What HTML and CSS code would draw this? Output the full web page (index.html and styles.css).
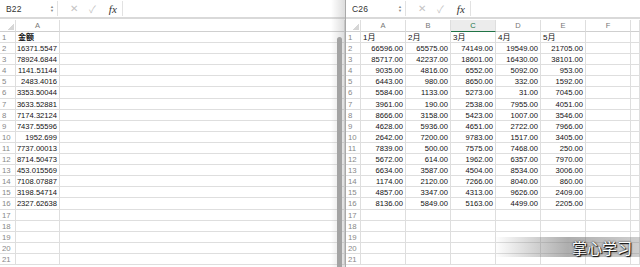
FILE: index.html
```html
<!DOCTYPE html>
<html lang="zh">
<head>
    <meta charset="UTF-8">
    <title>金额</title>
    <link rel="stylesheet" href="styles.css">
</head>
<body>
    <div class="screen">
        <div class="pane pane-left">
            <div class="toolbar">
                <div class="name-box">B22</div>
                <div class="stepper"><span>▲</span><span>▼</span></div>
                <div class="tool-icons">
                    <span class="cancel">✕</span>
                    <span class="ok">✓</span>
                    <span class="fx">fx</span>
                </div>
                <div class="formula"></div>
            </div>
            <div class="sheet sheet-left" id="leftSheet"></div>
            <div class="scroll-shadow"></div>
            <div class="scroll-thumb"></div>
        </div>

        <div class="pane pane-right">
            <div class="toolbar">
                <div class="name-box">C26</div>
                <div class="stepper"><span>▲</span><span>▼</span></div>
                <div class="tool-icons">
                    <span class="cancel">✕</span>
                    <span class="ok">✓</span>
                    <span class="fx">fx</span>
                </div>
                <div class="formula"></div>
            </div>
            <div class="sheet sheet-right" id="rightSheet"></div>
            <div class="watermark"><span>掌心学习</span></div>
        </div>
    </div>

    <script>
        const leftData = [
            '16371.5547', '78924.6844', '1141.51144', '2483.4016', '3353.50044',
            '3633.52881', '7174.32124', '7437.55596', '1952.699', '7737.00013',
            '8714.50473', '453.015569', '7108.07887', '3198.54714', '2327.62638'
        ];

        const rightData = [
            [66596, 65575, 74149, 19549, 21705],
            [85717, 42237, 18601, 16430, 38101],
            [9035, 4816, 6552, 5092, 953],
            [6443, 980, 8650, 332, 1592],
            [5584, 1133, 5273, 31, 7045],
            [3961, 190, 2538, 7955, 4051],
            [8666, 3158, 5423, 1007, 3546],
            [4628, 5936, 4651, 2722, 7966],
            [2642, 7200, 9783, 1517, 3405],
            [7839, 500, 7575, 7468, 250],
            [5672, 614, 1962, 6357, 7970],
            [6634, 3587, 4504, 8534, 3006],
            [1174, 2120, 7266, 8040, 860],
            [4857, 3347, 4313, 9626, 2409],
            [8136, 5849, 5163, 4499, 2205]
        ];

        function cell(parent, cls, text) {
            const el = document.createElement('div');
            el.className = cls;
            el.textContent = text || '';
            parent.appendChild(el);
        }

        function buildSheet(id, columns, rowValues) {
            const sheet = document.getElementById(id);
            cell(sheet, 'corner');
            columns.forEach(c => cell(sheet, 'col-head' + (c === 'C' && id === 'rightSheet' ? ' active' : ''), c));
            for (let r = 1; r <= 21; r++) {
                cell(sheet, 'row-head', r);
                const values = rowValues(r);
                columns.forEach((c, i) => {
                    cell(sheet, 'cell' + (r === 1 ? ' text' : ''), values[i]);
                });
            }
        }

        buildSheet('leftSheet', ['A', ''], r => {
            if (r === 1) return ['金额', ''];
            return [leftData[r - 2] || '', ''];
        });

        buildSheet('rightSheet', ['A', 'B', 'C', 'D', 'E', 'F', ''], r => {
            if (r === 1) return ['1月', '2月', '3月', '4月', '5月', '', ''];
            const row = rightData[r - 2];
            if (!row) return ['', '', '', '', '', '', ''];
            return row.map(n => n.toFixed(2)).concat(['', '']);
        });
    </script>
</body>
</html>
```

FILE: styles.css
```css
* {
    margin: 0;
    padding: 0;
    box-sizing: border-box;
}

body {
    font-family: 'Liberation Sans', Arial, 'Noto Sans CJK SC', sans-serif;
    background: #ffffff;
    color: #222;
    width: 640px;
    height: 267px;
    overflow: hidden;
}

.screen {
    display: flex;
    height: 267px;
}

.pane {
    position: relative;
    overflow: hidden;
    height: 267px;
}

.pane-left {
    width: 345px;
}

.pane-right {
    flex: 1;
    border-left: 1px solid #a9a9a9;
}

/* formula bar */
.toolbar {
    display: flex;
    align-items: center;
    height: 19px;
    border-bottom: 2px solid #d9d9d9;
    margin-bottom: 1px;
    font-size: 8.5px;
    color: #333;
}

.name-box {
    width: 50px;
    padding-left: 6px;
    letter-spacing: 0.2px;
}

.pane-right .name-box {
    width: 52px;
}

.stepper {
    display: flex;
    flex-direction: column;
    font-size: 4px;
    line-height: 4px;
    color: #888;
    width: 8px;
    border-right: 1px solid #e2e2e2;
    height: 15px;
    justify-content: center;
}

.tool-icons {
    display: flex;
    align-items: center;
    gap: 11px;
    padding: 0 5px 0 12px;
    height: 15px;
    border-right: 1px solid #e2e2e2;
    color: #c4c4c4;
}

.cancel,
.ok {
    font-size: 10px;
}

.fx {
    font-family: 'Liberation Serif', serif;
    font-style: italic;
    font-size: 11px;
    color: #333;
    padding-left: 2px;
}

/* grid */
.sheet {
    display: grid;
    grid-auto-rows: 11.1px;
    font-size: 7.6px;
    line-height: 11px;
}

.sheet-left {
    grid-template-columns: 16px 44px 1fr;
    grid-template-rows: 12px;
}

.sheet-right {
    grid-template-columns: 15px 45px 45px 45px 45px 45px 45px 1fr;
    grid-template-rows: 12px;
}

.corner,
.col-head,
.row-head,
.cell {
    border-right: 1px solid #dedede;
    border-bottom: 1px solid #dedede;
    white-space: nowrap;
    overflow: hidden;
}

.corner {
    background: linear-gradient(135deg, transparent 60%, #d6d6d6 60%);
    background-size: 8px 8px;
    background-repeat: no-repeat;
    background-position: right 1px bottom 1px;
    border-bottom-color: #cfcfcf;
}

.col-head {
    text-align: center;
    color: #777;
    font-size: 7.5px;
    line-height: 12px;
    border-bottom-color: #cfcfcf;
}

.col-head.active {
    color: #217346;
    background: #ececec;
    border-bottom: 1px solid #217346;
}

.row-head {
    color: #888;
    padding-left: 2px;
    font-size: 7.8px;
}

.cell {
    text-align: right;
    padding-right: 2px;
    color: #111;
}

.cell.text {
    text-align: left;
    padding-left: 2px;
    font-size: 8px;
}

.sheet-left .cell.text {
    font-weight: bold;
}

/* left window edge */
.scroll-shadow {
    position: absolute;
    top: 0;
    right: 0;
    width: 14px;
    height: 100%;
    background: linear-gradient(90deg, rgba(255,255,255,0), rgba(140,140,140,0.3));
}

.scroll-thumb {
    position: absolute;
    top: 37px;
    right: 3px;
    width: 5px;
    bottom: 0;
    border-radius: 3px 3px 0 0;
    background: #a3a3a3;
}

/* watermark */
.watermark {
    position: absolute;
    left: 148px;
    top: 237px;
    width: 148px;
    height: 20px;
    display: flex;
    justify-content: flex-end;
    align-items: center;
    padding-right: 10px;
    background: linear-gradient(90deg, rgba(150,150,150,0), rgba(120,120,120,0.6) 50%, rgba(120,120,120,0.35));
}

.watermark span {
    font-family: 'Noto Sans CJK SC', sans-serif;
    font-size: 15px;
    color: #ffffff;
    text-shadow: 0 0 2px #000, 1px 1px 1px #000;
}
```
